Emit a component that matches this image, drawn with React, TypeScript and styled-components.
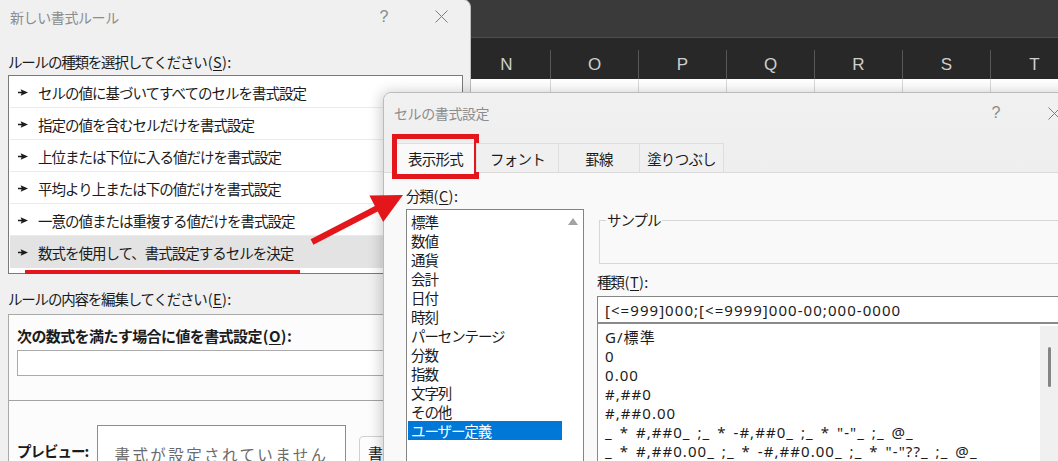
import React from 'react';
import styled, { createGlobalStyle } from 'styled-components';

const FONT = `"Noto Sans CJK JP", "Noto Sans", sans-serif`;
const LATIN_FONT = `"Noto Sans", "Noto Sans CJK JP", sans-serif`;

const GlobalStyle = createGlobalStyle`
  html, body {
    margin: 0;
    padding: 0;
    background: #ffffff;
  }
  body {
    font-family: ${FONT};
  }
`;

const Desktop = styled.div`
  position: relative;
  width: 1058px;
  height: 461px;
  overflow: hidden;
  background: #ffffff;
  font-family: ${FONT};
  color: #1b1b1b;
`;

/* ---------- spreadsheet behind the dialogs ---------- */

const Sheet = styled.div`
  position: absolute;
  left: 440px;
  top: 0;
  right: 0;
  height: 110px;
  display: flex;
  flex-direction: column;
  background: #ffffff;
`;

const SheetBand = styled.div`
  height: 37px;
  background: #3a3a3a;
  border-bottom: 1px solid #4d4d4d;
`;

const ColumnHeaders = styled.div`
  display: flex;
  height: 41px;
  box-sizing: border-box;
  padding: 12px 0 0 23px;
  background: #282828;
`;

const ColumnHeader = styled.div`
  flex: 0 0 88px;
  box-sizing: border-box;
  display: flex;
  align-items: center;
  justify-content: center;
  border-right: 1px solid #575757;
  color: #cfcfcf;
  font-family: 'Liberation Sans', 'Noto Sans', sans-serif;
  font-size: 17px;
`;

const GridRow = styled.div`
  display: flex;
  height: 22px;
  padding-left: 23px;
`;

const GridCell = styled.div`
  flex: 0 0 88px;
  box-sizing: border-box;
  border-right: 1px solid #d9d9d9;
  border-bottom: 1px solid #d9d9d9;
`;

/* ---------- shared window chrome ---------- */

const Window = styled.section`
  position: absolute;
  box-sizing: border-box;
  display: flex;
  flex-direction: column;
  border: 1px solid #bcbcbc;
`;

const TitleBar = styled.header<{ $height: number; $gap: number }>`
  display: flex;
  align-items: center;
  height: ${({ $height }) => $height}px;
  flex: 0 0 auto;
  padding: 0 6px 0 10px;
  gap: ${({ $gap }) => $gap}px;
`;

const WindowTitle = styled.span`
  flex: 1;
  font-size: 14px;
  line-height: 20px;
  letter-spacing: -0.4px;
  color: #8c8c8c;
`;

const TitleButton = styled.span`
  width: 46px;
  display: flex;
  align-items: center;
  justify-content: center;
  color: #8a8a8a;
  font-family: 'Liberation Sans', sans-serif;
  font-size: 16px;
  line-height: 20px;
`;

const FieldLabel = styled.div<{ $top: number }>`
  margin-top: ${({ $top }) => $top}px;
  font-size: 14.5px;
  line-height: 20px;
  letter-spacing: -1.2px;
  white-space: nowrap;
`;

// "(S):" style access-key suffix, kept at normal spacing
const Shortcut = styled.span`
  letter-spacing: 0.4px;
  margin-left: 1px;
`;

const Mnemonic = styled.u`
  text-underline-offset: 2px;
`;

function CloseIcon() {
  return (
    <svg width="13" height="13" viewBox="0 0 13 13">
      <path d="M0.5 0.5 L12.5 12.5 M12.5 0.5 L0.5 12.5" stroke="#7d7d7d" strokeWidth="1" />
    </svg>
  );
}

/* ---------- 新しい書式ルール ---------- */

const RuleDialog = styled(Window)`
  left: -1px;
  top: -1px;
  width: 472px;
  height: 480px;
  background: #f0f0f0;
  border-top-right-radius: 8px;
`;

const RuleBody = styled.div`
  display: flex;
  flex-direction: column;
  padding: 0 7px 0 8px;
`;

const RuleList = styled.div`
  margin-top: 3px;
  border: 1px solid #7a7a7a;
  background: #ffffff;
  padding: 0 1px 5px;
`;

const RuleRow = styled.div<{ $selected?: boolean }>`
  display: flex;
  align-items: center;
  gap: 10px;
  height: 32px;
  box-sizing: border-box;
  padding: 2px 0 0 8px;
  border-bottom: 1px solid ${({ $selected }) => ($selected ? '#e3e3e3' : '#ebebeb')};
  background: ${({ $selected }) => ($selected ? '#e3e3e3' : '#ffffff')};
  font-size: 14.5px;
  letter-spacing: -1px;
  white-space: nowrap;
`;

function RuleBullet() {
  return (
    <svg width="10" height="7" viewBox="0 0 10 7">
      <polygon points="0,2.7 3.6,2.7 2.6,0.2 10,3.5 2.6,6.8 3.6,4.3 0,4.3" fill="#1b1b1b" />
    </svg>
  );
}

const EditBox = styled.div`
  margin-top: 5px;
  border: 1px solid #a9a9a9;
  background: #fcfcfc;
  height: 200px;
`;

const EditTop = styled.div`
  padding: 11px 8px 24px;
  border-bottom: 1px solid #a3a3a3;
`;

const BoldLabel = styled.div`
  font-size: 15px;
  line-height: 20px;
  font-weight: 700;
  letter-spacing: -0.6px;
  white-space: nowrap;
`;

const FormulaInput = styled.div`
  margin-top: 4px;
  height: 26px;
  box-sizing: border-box;
  border: 1px solid #ababab;
  background: #ffffff;
`;

const PreviewRow = styled.div`
  display: flex;
  align-items: flex-start;
  padding: 24px 8px 0;
`;

const PreviewLabel = styled.div`
  width: 80px;
  margin-top: 16px;
  font-size: 14.5px;
  line-height: 20px;
  font-weight: 700;
  letter-spacing: -1px;
`;

const PreviewBox = styled.div`
  width: 249px;
  height: 58px;
  box-sizing: border-box;
  display: flex;
  align-items: center;
  justify-content: center;
  border: 1px solid #8d8d8d;
  background: #ffffff;
  color: #6a6a6a;
  font-size: 15.5px;
  letter-spacing: 2.4px;
  white-space: nowrap;
`;

const FormatButton = styled.div`
  margin: 11px 0 0 13px;
  width: 90px;
  height: 32px;
  box-sizing: border-box;
  display: flex;
  align-items: center;
  padding-left: 8px;
  border: 1px solid #d0d0d0;
  border-radius: 4px;
  background: #fdfdfd;
  font-size: 15px;
  white-space: nowrap;
`;

/* ---------- セルの書式設定 ---------- */

const FormatDialog = styled(Window)`
  left: 383px;
  top: 92px;
  width: 701px;
  height: 400px;
  background: #f9f9f9;
  border-top-left-radius: 8px;
  box-shadow: -2px 0 14px rgba(0, 0, 0, 0.2);
`;

const DialogHead = styled.div`
  background: linear-gradient(#f1f1f1, #eeeeee);
  border-top-left-radius: 8px;
`;

const TabStrip = styled.div`
  display: flex;
  align-items: flex-end;
  height: 40px;
  box-sizing: border-box;
  padding-left: 11px;
  border-bottom: 1px solid #dadada;
`;

const Tab = styled.div<{ $selected?: boolean; $width: number }>`
  position: relative;
  width: ${({ $width }) => $width}px;
  height: ${({ $selected }) => ($selected ? 30 : 29)}px;
  margin-bottom: ${({ $selected }) => ($selected ? -1 : 0)}px;
  box-sizing: border-box;
  display: flex;
  align-items: center;
  justify-content: center;
  padding-bottom: ${({ $selected }) => ($selected ? 1 : 0)}px;
  border: 1px solid #dedede;
  border-bottom: none;
  margin-left: -1px;
  background: ${({ $selected }) => ($selected ? '#f9f9f9' : '#f0f0f0')};
  font-size: 14.5px;
  letter-spacing: -0.8px;
  white-space: nowrap;
`;

const TabHighlight = styled.div`
  position: absolute;
  left: -3px;
  top: -10px;
  width: 87px;
  height: 45px;
  box-sizing: border-box;
  border: 5px solid #e3161b;
`;

const ContentGrid = styled.div`
  display: grid;
  grid-template-columns: 178px 466px;
  column-gap: 13px;
  padding: 13px 0 0 22px;
`;

const Column = styled.div`
  display: flex;
  flex-direction: column;
  min-width: 0;
`;

const CategoryList = styled.div`
  margin-top: 3px;
  height: 270px;
  display: flex;
  border: 1px solid #848484;
  background: #ffffff;
`;

const CategoryItems = styled.div`
  flex: 1;
  padding: 2px 0 0 1px;
`;

const CategoryItem = styled.div<{ $selected?: boolean }>`
  height: 19px;
  line-height: 19px;
  padding-left: 3px;
  font-size: 14.5px;
  letter-spacing: -1.1px;
  white-space: nowrap;
  background: ${({ $selected }) => ($selected ? '#0078d7' : 'transparent')};
  color: ${({ $selected }) => ($selected ? '#ffffff' : '#1b1b1b')};
`;

const ListScroll = styled.div`
  flex: 0 0 21px;
  display: flex;
  justify-content: center;
  padding-top: 8px;
`;

const SampleGroup = styled.fieldset`
  margin: 25px 0 0 2px;
  padding: 0;
  height: 53px;
  box-sizing: border-box;
  border: 1px solid #d6d6d6;
  min-width: 0;
`;

const SampleLegend = styled.legend`
  margin-left: 6px;
  padding: 0 1px;
  font-size: 14.5px;
  letter-spacing: -1px;
  line-height: 18px;
`;

const TypeInput = styled.div`
  margin-top: 4px;
  height: 28px;
  box-sizing: border-box;
  display: flex;
  align-items: center;
  padding-left: 7px;
  border: 1px solid #858585;
  border-bottom: 2px solid #8a8a8a;
  background: #ffffff;
  font-family: ${LATIN_FONT};
  font-size: 15px;
  letter-spacing: 1.05px;
  white-space: nowrap;
`;

const TypeList = styled.div`
  height: 200px;
  display: flex;
  border: 1px solid #8a8a8a;
  border-top: none;
  background: #ffffff;
`;

const TypeItems = styled.div`
  flex: 1;
  padding: 4px 0 0 7px;
`;

const TypeItem = styled.div`
  height: 19px;
  line-height: 19px;
  font-family: ${LATIN_FONT};
  font-size: 15px;
  letter-spacing: 1.05px;
  word-spacing: 2px;
  white-space: pre;
`;

const TypeScroll = styled.div`
  flex: 0 0 22px;
  margin-top: 2px;
  background: #f0f0f0;
  padding: 21px 0 0 8px;
  box-sizing: border-box;
`;

const ScrollThumb = styled.div`
  width: 3px;
  height: 40px;
  border-radius: 2px;
  background: #858585;
`;

/* ---------- red annotations ---------- */

const Annotations = styled.svg`
  position: absolute;
  left: 0;
  top: 0;
  pointer-events: none;
`;

const COLUMNS = ['N', 'O', 'P', 'Q', 'R', 'S', 'T'];

const RULES = [
  'セルの値に基づいてすべてのセルを書式設定',
  '指定の値を含むセルだけを書式設定',
  '上位または下位に入る値だけを書式設定',
  '平均より上または下の値だけを書式設定',
  '一意の値または重複する値だけを書式設定',
  '数式を使用して、書式設定するセルを決定',
];

const CATEGORIES = [
  '標準',
  '数値',
  '通貨',
  '会計',
  '日付',
  '時刻',
  'パーセンテージ',
  '分数',
  '指数',
  '文字列',
  'その他',
  'ユーザー定義',
];

const FORMATS = [
  'G/標準',
  '0',
  '0.00',
  '#,##0',
  '#,##0.00',
  '_ * #,##0_ ;_ * -#,##0_ ;_ * "-"_ ;_ @_',
  '_ * #,##0.00_ ;_ * -#,##0.00_ ;_ * "-"??_ ;_ @_',
];

const TABS = [
  { label: '表示形式', width: 83 },
  { label: 'フォント', width: 83 },
  { label: '罫線', width: 82 },
  { label: '塗りつぶし', width: 85 },
];

function Key({ k }: { k: string }) {
  return (
    <Shortcut>
      (<Mnemonic>{k}</Mnemonic>):
    </Shortcut>
  );
}

export default function App() {
  return (
    <Desktop>
      <GlobalStyle />

      <Sheet>
        <SheetBand />
        <ColumnHeaders>
          {COLUMNS.map(c => (
            <ColumnHeader key={c}>{c}</ColumnHeader>
          ))}
        </ColumnHeaders>
        <GridRow>
          {COLUMNS.map(c => (
            <GridCell key={c} />
          ))}
        </GridRow>
      </Sheet>

      <RuleDialog>
        <TitleBar $height={33} $gap={11}>
          <WindowTitle>新しい書式ルール</WindowTitle>
          <TitleButton>?</TitleButton>
          <TitleButton>
            <CloseIcon />
          </TitleButton>
        </TitleBar>
        <RuleBody>
          <FieldLabel $top={19}>
            ルールの種類を選択してください<Key k="S" />
          </FieldLabel>
          <RuleList>
            {RULES.map((r, i) => (
              <RuleRow key={r} $selected={i === RULES.length - 1}>
                <RuleBullet />
                {r}
              </RuleRow>
            ))}
          </RuleList>
          <FieldLabel $top={15}>
            ルールの内容を編集してください<Key k="E" />
          </FieldLabel>
          <EditBox>
            <EditTop>
              <BoldLabel>
                次の数式を満たす場合に値を書式設定<Key k="O" />
              </BoldLabel>
              <FormulaInput />
            </EditTop>
            <PreviewRow>
              <PreviewLabel>プレビュー:</PreviewLabel>
              <PreviewBox>書式が設定されていません</PreviewBox>
              <FormatButton>書式(F)...</FormatButton>
            </PreviewRow>
          </EditBox>
        </RuleBody>
      </RuleDialog>

      <FormatDialog>
        <DialogHead>
          <TitleBar $height={40} $gap={12}>
            <WindowTitle>セルの書式設定</WindowTitle>
            <TitleButton>?</TitleButton>
            <TitleButton>
              <CloseIcon />
            </TitleButton>
          </TitleBar>
          <TabStrip>
            {TABS.map((t, i) => (
              <Tab key={t.label} $selected={i === 0} $width={t.width}>
                {t.label}
                {i === 0 && <TabHighlight />}
              </Tab>
            ))}
          </TabStrip>
        </DialogHead>
        <ContentGrid>
          <Column>
            <FieldLabel $top={0}>
              分類<Key k="C" />
            </FieldLabel>
            <CategoryList>
              <CategoryItems>
                {CATEGORIES.map((c, i) => (
                  <CategoryItem key={c} $selected={i === CATEGORIES.length - 1}>
                    {c}
                  </CategoryItem>
                ))}
              </CategoryItems>
              <ListScroll>
                <svg width="10" height="7" viewBox="0 0 10 7">
                  <polygon points="5,0 10,7 0,7" fill="#a3a3a3" />
                </svg>
              </ListScroll>
            </CategoryList>
          </Column>
          <Column>
            <SampleGroup>
              <SampleLegend>サンプル</SampleLegend>
            </SampleGroup>
            <FieldLabel $top={8}>
              種類<Key k="T" />
            </FieldLabel>
            <TypeInput>[&lt;=999]000;[&lt;=9999]000-00;000-0000</TypeInput>
            <TypeList>
              <TypeItems>
                {FORMATS.map(f => (
                  <TypeItem key={f}>{f}</TypeItem>
                ))}
              </TypeItems>
              <TypeScroll>
                <ScrollThumb />
              </TypeScroll>
            </TypeList>
          </Column>
        </ContentGrid>
      </FormatDialog>

      <Annotations width="1058" height="461" viewBox="0 0 1058 461">
        <rect x="25" y="270" width="275" height="4" fill="#e3161b" />
        <polygon
          points="310.6,239.3 374.9,206.1 369.4,195.5 403,195 383.2,222.1 377.7,211.5 313.4,244.7"
          fill="#e3161b"
        />
      </Annotations>
    </Desktop>
  );
}
